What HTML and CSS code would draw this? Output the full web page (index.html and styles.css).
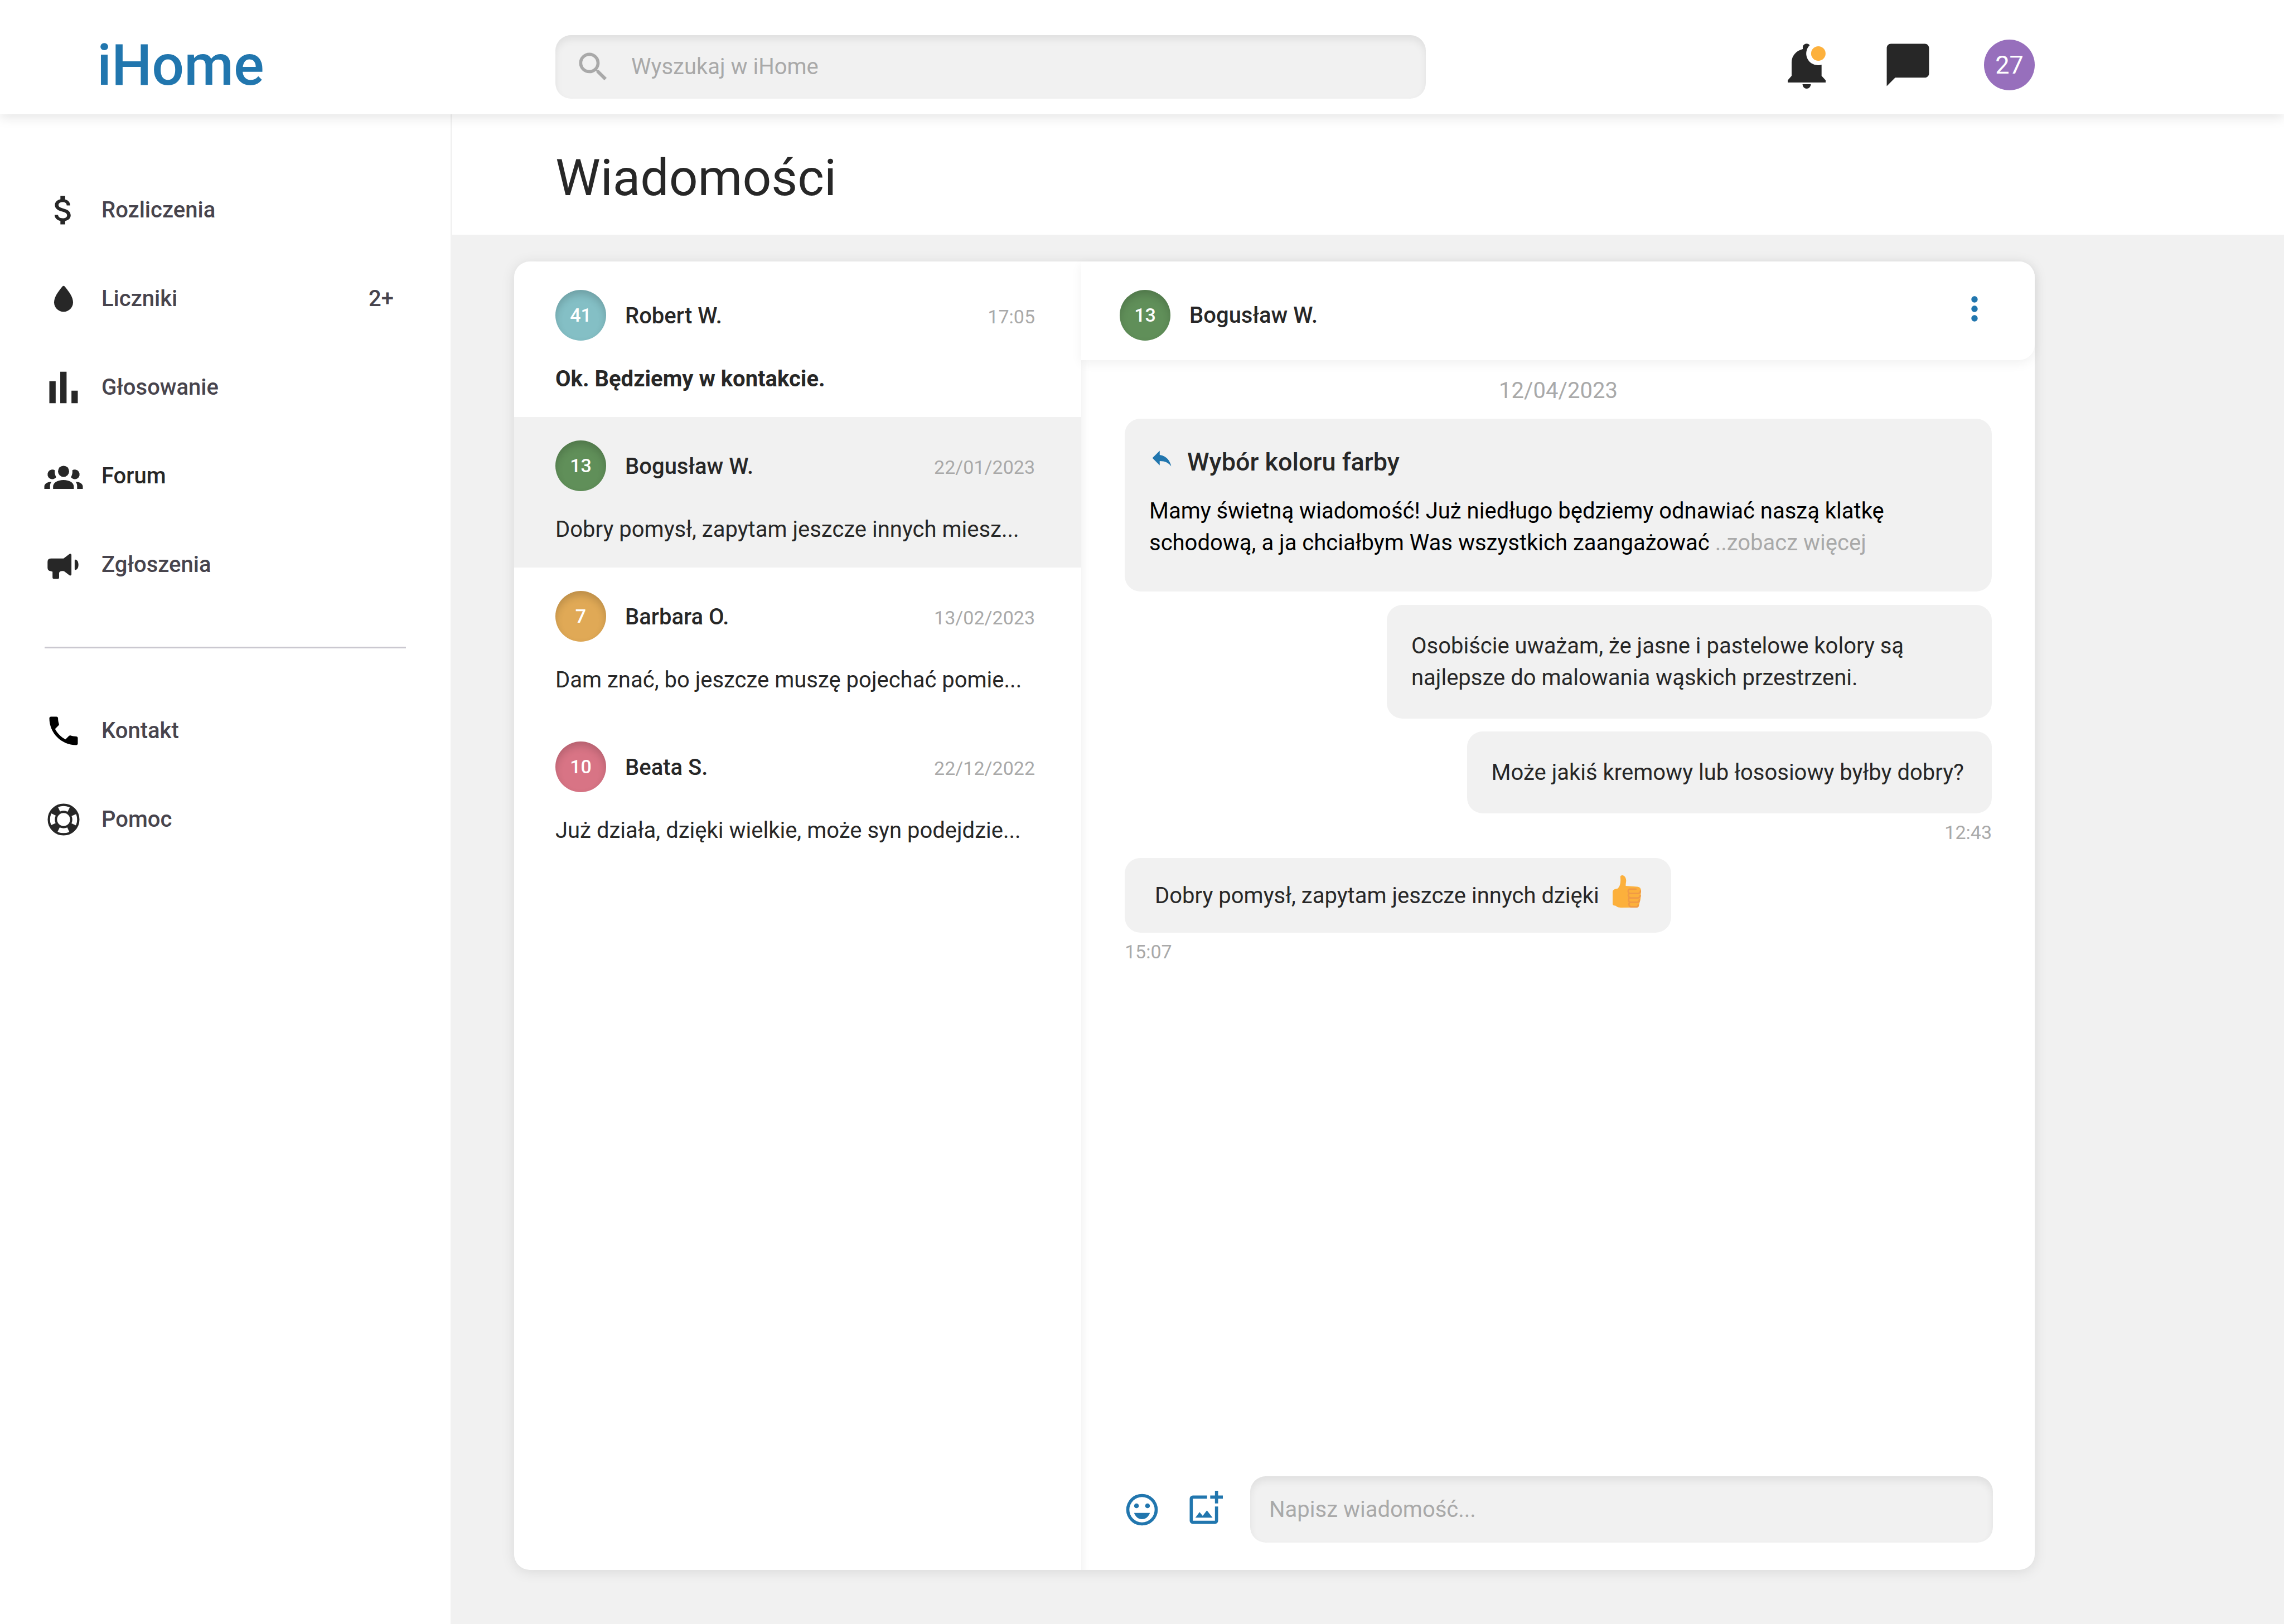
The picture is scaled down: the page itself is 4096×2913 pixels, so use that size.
FILE: index.html
```html
<!DOCTYPE html>
<html lang="pl">
<head>
<meta charset="utf-8">
<meta name="viewport" content="width=device-width, initial-scale=1">
<title>iHome – Wiadomości</title>
<link rel="stylesheet" href="styles.css">
</head>
<body>
<header class="topbar">
  <a class="logo" href="#">iHome</a>
  <form class="search" role="search">
    <svg class="icon" viewBox="0 0 24 24" aria-hidden="true"><path d="M15.5 14h-.79l-.28-.27A6.47 6.47 0 0 0 16 9.5 6.5 6.5 0 1 0 9.5 16c1.61 0 3.09-.59 4.23-1.57l.27.28v.79l5 4.99L20.49 19l-4.99-5zm-6 0C7.01 14 5 11.99 5 9.5S7.01 5 9.5 5 14 7.01 14 9.5 11.99 14 9.5 14z"/></svg>
    <input class="search-input" type="search" placeholder="Wyszukaj w iHome" aria-label="Wyszukaj w iHome">
  </form>
  <div class="actions">
    <button class="action" type="button" aria-label="Powiadomienia">
      <svg viewBox="-12 -8 91 91" aria-hidden="true">
        <path d="M0 69v-4l7-8V33c0-12 8-21 20-24V7a7 7 0 0 1 12.500-5A21 21 0 0 0 54.900 38q3 0 5.800-1v20l7.300 8v4zM26.500 72h15a7.500 8 0 0 1-15 0z"/>
        <circle cx="54.900" cy="17" r="13" fill="#fdb13d"/>
      </svg>
    </button>
    <button class="action" type="button" aria-label="Wiadomości">
      <svg viewBox="0 0 24 24" aria-hidden="true"><path d="M20 2H4c-1.100 0-2 .9-2 2v18l4-4h14c1.100 0 2-.9 2-2V4c0-1.100-.9-2-2-2z"/></svg>
    </button>
    <button class="action account" type="button">27</button>
  </div>
</header>

<div class="layout">
  <nav class="sidebar" aria-label="Menu główne">
    <ul class="menu">
      <li><a class="menu-link" href="#">
        <svg class="icon" viewBox="0 0 24 24" aria-hidden="true"><path d="M11.800 10.900c-2.270-.59-3-1.200-3-2.150 0-1.090 1.010-1.850 2.700-1.850 1.780 0 2.440.85 2.500 2.100h2.210c-.07-1.720-1.120-3.300-3.210-3.810V3h-3v2.160c-1.940.42-3.500 1.680-3.500 3.610 0 2.310 1.910 3.460 4.700 4.130 2.500.6 3 1.480 3 2.410 0 .69-.49 1.790-2.700 1.790-2.060 0-2.870-.92-2.980-2.100h-2.200c.12 2.190 1.760 3.420 3.680 3.830V21h3v-2.150c1.950-.37 3.500-1.500 3.500-3.550 0-2.840-2.430-3.810-4.700-4.400z"/></svg>
        <span>Rozliczenia</span></a></li>
      <li><a class="menu-link" href="#">
        <svg class="icon" viewBox="0 0 24 24" aria-hidden="true"><path d="M11.200 4.200q.8-.8 1.600 0C15.700 7.800 18 11 18 14.200a6 6 0 0 1-12 0C6 11 8.300 7.800 11.200 4.200z"/></svg>
        <span>Liczniki</span><span class="menu-count">2+</span></a></li>
      <li><a class="menu-link" href="#">
        <svg class="icon" viewBox="0 0 24 24" aria-hidden="true"><path d="M3 8h4v14H3zM9.900 2h4v20h-4zM17 14h4v8h-4z"/></svg>
        <span>Głosowanie</span></a></li>
      <li><a class="menu-link is-active" href="#">
        <svg class="icon" viewBox="0 0 68 68" aria-hidden="true"><circle cx="34" cy="25.400" r="10"/><path d="M15.200 57v-4.500C15.200 46 23 41 33.900 41s18.500 5 18.500 11.500V57zM18.300 23.600A8.600 8.600 0 1 0 20.800 36Q17.400 30 18.300 23.600zM49.700 23.600A8.600 8.600 0 1 1 47.200 36Q50.600 30 49.700 23.600zM-.5 57v-4.500c0-5 6-8.300 13.100-8.300Q9.700 47 9.700 52v5zM68.500 57v-4.500c0-5-6-8.300-13.100-8.300Q58.300 47 58.300 52v5z"/></svg>
        <span>Forum</span></a></li>
      <li><a class="menu-link" href="#">
        <svg class="icon" viewBox="0 0 68 68" aria-hidden="true"><path d="M11.300 22.800H34l10.500-8.100q2.200-1.400 3.600 1v35.800q-1.400 3-3.800 1.300L35.500 46q-1.500-1.200-3.500-.7-6 0-6 4V57q0 2.300-2.300 2.300h-7.200q-2.300 0-2.300-2.300V46.500l-3-1q-5.900-.6-5.900-6V28.800q0-6 6-6zM53.900 26.200q0-1.400 1.200-1.400c3 0 5.600 3.600 5.600 9.200s-2.600 9.300-5.600 9.300q-1.200 0-1.200-1.400z"/></svg>
        <span>Zgłoszenia</span></a></li>
    </ul>
    <hr class="menu-rule">
    <ul class="menu">
      <li><a class="menu-link" href="#">
        <svg class="icon icon-black" viewBox="0 0 24 24" aria-hidden="true"><path d="M6.620 10.790c1.440 2.830 3.760 5.140 6.590 6.590l2.200-2.200c.27-.27.67-.36 1.020-.24 1.120.37 2.330.57 3.570.57.55 0 1 .45 1 1V20c0 .55-.45 1-1 1-9.390 0-17-7.610-17-17 0-.55.45-1 1-1h3.500c.55 0 1 .45 1 1 0 1.250.2 2.450.57 3.570.11.35.03.74-.25 1.020l-2.200 2.200z"/></svg>
        <span>Kontakt</span></a></li>
      <li><a class="menu-link" href="#">
        <svg class="icon" viewBox="0 0 68 68" aria-hidden="true"><g fill="none" stroke="#272727"><circle cx="34" cy="34" r="26.400" stroke-width="4.200"/><circle cx="34" cy="34" r="13.700" stroke-width="4"/><circle cx="34" cy="34" r="20" stroke-width="10" stroke-dasharray="13.600 17.816" stroke-dashoffset="-8.900"/></g></svg>
        <span>Pomoc</span></a></li>
    </ul>
  </nav>

  <main class="content">
    <div class="title-band"><h1 class="title">Wiadomości</h1></div>
    <section class="card">
      <ul class="threads">
        <li><a class="thread" href="#">
          <span class="thread-head"><span class="avatar avatar-teal">41</span><span class="thread-meta"><span class="name">Robert W.</span><time class="stamp">17:05</time></span></span>
          <span class="preview is-unread">Ok. Będziemy w kontakcie.</span></a></li>
        <li><a class="thread is-selected" href="#">
          <span class="thread-head"><span class="avatar avatar-green">13</span><span class="thread-meta"><span class="name">Bogusław W.</span><time class="stamp">22/01/2023</time></span></span>
          <span class="preview">Dobry pomysł, zapytam jeszcze innych miesz...</span></a></li>
        <li><a class="thread" href="#">
          <span class="thread-head"><span class="avatar avatar-amber">7</span><span class="thread-meta"><span class="name">Barbara O.</span><time class="stamp">13/02/2023</time></span></span>
          <span class="preview">Dam znać, bo jeszcze muszę pojechać pomie...</span></a></li>
        <li><a class="thread" href="#">
          <span class="thread-head"><span class="avatar avatar-pink">10</span><span class="thread-meta"><span class="name">Beata S.</span><time class="stamp">22/12/2022</time></span></span>
          <span class="preview">Już działa, dzięki wielkie, może syn podejdzie...</span></a></li>
      </ul>

      <section class="chat">
        <header class="chat-head">
          <span class="avatar avatar-green">13</span>
          <h2 class="name">Bogusław W.</h2>
          <button class="icon-button chat-menu" type="button" aria-label="Więcej opcji">
            <svg class="icon icon-blue" viewBox="0 0 24 24" aria-hidden="true"><path d="M12 8c1.100 0 2-.9 2-2s-.9-2-2-2-2 .9-2 2 .9 2 2 2zm0 2c-1.100 0-2 .9-2 2s.9 2 2 2 2-.9 2-2-.9-2-2-2zm0 6c-1.100 0-2 .9-2 2s.9 2 2 2 2-.9 2-2-.9-2-2-2z"/></svg>
          </button>
        </header>
        <div class="messages">
          <time class="day">12/04/2023</time>
          <article class="bubble bubble-quote">
            <h3 class="quote-title"><svg class="reply-icon" viewBox="0 0 24 24" aria-hidden="true"><path d="M10 9V5l-7 7 7 7v-4.100c5 0 8.500 1.600 11 5.100-1-5-4-10-11-11z"/></svg>Wybór koloru farby</h3>
            <p class="quote-text">Mamy świetną wiadomość! Już niedługo będziemy odnawiać naszą klatkę schodową, a ja chciałbym Was wszystkich zaangażować <a class="more" href="#">..zobacz więcej</a></p>
          </article>
          <p class="bubble bubble-own">Osobiście uważam, że jasne i pastelowe kolory są najlepsze do malowania wąskich przestrzeni.</p>
          <p class="bubble bubble-own">Może jakiś kremowy lub łososiowy byłby dobry?</p>
          <time class="stamp sent-at sent-at-own">12:43</time>
          <p class="bubble bubble-reply">Dobry pomysł, zapytam jeszcze innych dzięki
            <svg class="thumb" viewBox="107 59 223 253" role="img" aria-label="Kciuk w górę">
              <path fill="#fcb03c" d="M168 66q2-7 16-7c16 2 27 18 29 38 1 16-5 30-3 45l90 6c20 2 31 13 29 34l-3 60-14 60q-3 9-12 9l-130 1q-20 0-27-5l-12-9-17-3q-7-4-7-14V188q1-12 10-17 8-5 30-8 22-23 22-65c0-14-2-22-1-32z"/>
              <g fill="none" stroke="#f09a45" stroke-width="12" stroke-linecap="round" stroke-linejoin="round"><path d="M290 167h-48q-14 2-13 18 1 15 16 16h64q15-1 16-18M241 201q-12 4-11 17 2 17 18 18h60q14-2 15-18M243 236q-12 3-11 17 1 16 14 17h56q13-2 15-18M246 270q-11 3-11 17 1 17 16 19h44q11-1 13-14"/></g>
            </svg>
          </p>
          <time class="stamp sent-at">15:07</time>
        </div>
        <form class="composer">
          <button class="icon-button" type="button" aria-label="Emotikony">
            <svg class="icon icon-blue" viewBox="0 0 24 24" aria-hidden="true"><path d="M12 2a10 10 0 1 0 0 20 10 10 0 0 0 0-20zm0 18a8 8 0 1 1 0-16 8 8 0 0 1 0 16zM8.500 11a1.500 1.500 0 1 0 0-3 1.500 1.500 0 0 0 0 3zm7 0a1.500 1.500 0 1 0 0-3 1.500 1.500 0 0 0 0 3zM12 18c2.330 0 4.200-1.660 5-4H7c.8 2.340 2.670 4 5 4z"/></svg>
          </button>
          <button class="icon-button" type="button" aria-label="Dodaj zdjęcie">
            <svg class="icon icon-blue" viewBox="0 0 24 24" aria-hidden="true"><path d="M14 3v2H5v14h14v-9h2v9a2 2 0 0 1-2 2H5a2 2 0 0 1-2-2V5a2 2 0 0 1 2-2zM19 0h2v3h3v2h-3v3h-2V5h-3V3h3zM6.600 17l2.650-3.500 2 2.400 2.650-3.500 3.600 4.600z"/></svg>
          </button>
          <input class="composer-input" type="text" placeholder="Napisz wiadomość..." aria-label="Napisz wiadomość">
        </form>
      </section>
    </section>
  </main>
</div>
</body>
</html>
```
FILE: styles.css
```css
:root {
  --ink: #272727;
  --muted: #a9a9a9;
  --blue: #2176ae;
  --grey: #f1f1f1;
  --text: 40px;
  --small: 34px;
  --radius: 28px;
}

* {
  box-sizing: border-box;
}

body {
  margin: 0;
  min-height: 100vh;
  display: flex;
  flex-direction: column;
  background: #fff;
  color: var(--ink);
  font-family: Roboto, "Liberation Sans", sans-serif;
  font-size: var(--text);
  line-height: 57px;
}

h1, h2, h3, p, ul {
  margin: 0;
  padding: 0;
}

ul {
  list-style: none;
}

a {
  color: inherit;
  text-decoration: none;
}

button {
  padding: 0;
  border: 0;
  background: none;
  color: inherit;
  font: inherit;
}

input {
  border: 0;
  outline: 0;
  background: none;
  color: var(--ink);
  font: inherit;
}

input::placeholder {
  color: var(--muted);
  opacity: 1;
}

.icon {
  display: block;
  flex: none;
  width: 68px;
  height: 68px;
  fill: var(--ink);
  overflow: visible;
}

.icon-black {
  fill: #000;
}

.icon-blue {
  fill: var(--blue);
}

/* Top bar */

.topbar {
  position: relative;
  z-index: 1;
  display: grid;
  grid-template-columns: 996px minmax(0, 1561px) 1fr;
  align-items: center;
  height: 205px;
  padding: 34px 447px 0 0;
  background: #fff;
  box-shadow: 0 6px 20px rgba(0, 0, 0, 0.1);
}

.logo {
  padding: 0 0 6px 174px;
  color: var(--blue);
  font-size: 102px;
  font-weight: 500;
  line-height: 114px;
}

.search {
  display: flex;
  align-items: center;
  gap: 34px;
  height: 114px;
  padding: 0 34px;
  border-radius: var(--radius);
  background: var(--grey);
  box-shadow: inset 0 8px 14px rgba(0, 0, 0, 0.07);
}

.search .icon {
  fill: var(--muted);
}

.search-input {
  flex: 1;
  min-width: 0;
  padding: 0;
}

.actions {
  display: flex;
  justify-content: flex-end;
  gap: 91px;
  padding-bottom: 6px;
}

.action {
  width: 91px;
  height: 91px;
}

.action svg {
  display: block;
  width: 91px;
  height: 91px;
  fill: var(--ink);
}

.account {
  border-radius: 50%;
  background: #976fbc;
  color: #fff;
  font-size: 45px;
}

/* Side menu */

.layout {
  flex: 1;
  display: grid;
  grid-template-columns: 811px minmax(0, 1fr);
}

.sidebar {
  padding-top: 92px;
  border-right: 3px solid var(--grey);
}

.menu-link {
  display: flex;
  align-items: center;
  gap: 34px;
  height: 159px;
  padding: 0 102px 0 80px;
  color: #47444d;
  font-weight: 500;
}

.menu-link.is-active {
  color: var(--ink);
}

.menu-count {
  margin-left: auto;
}

.menu-rule {
  height: 3px;
  margin: 68px 80px;
  border: 0;
  background: #cac8d0;
}

/* Page content */

.content {
  display: flex;
  flex-direction: column;
  background: var(--grey);
}

.title-band {
  padding: 68px 185px 56px;
  background: #fff;
}

.title {
  font-size: 91px;
  font-weight: 400;
  line-height: 92px;
}

.card {
  flex: 1;
  display: grid;
  grid-template-columns: 1017px minmax(0, 1fr);
  margin: 48px 447px 97px 111px;
  border-radius: var(--radius);
  background: #fff;
  box-shadow: 0 3px 24px rgba(0, 0, 0, 0.1);
}

.threads {
  padding-top: 9px;
}

.thread {
  display: flex;
  flex-direction: column;
  gap: 41px;
  padding: 42px 83px 40px 74px;
}

.thread.is-selected {
  background: var(--grey);
}

.thread-head {
  display: flex;
  align-items: center;
  gap: 34px;
}

.thread-meta {
  flex: 1;
  display: flex;
  align-items: baseline;
  justify-content: space-between;
  padding-top: 4px;
}

.avatar {
  display: grid;
  place-items: center;
  flex: none;
  width: 91px;
  height: 91px;
  border-radius: 50%;
  color: #fff;
  font-size: var(--small);
  font-weight: 500;
  box-shadow: inset 0 8px 14px rgba(0, 0, 0, 0.16);
}

.avatar-teal {
  background: #84bfc5;
}

.avatar-green {
  background: #608f59;
}

.avatar-amber {
  background: #e0a956;
}

.avatar-pink {
  background: #d87485;
}

.name {
  font-size: var(--text);
  font-weight: 500;
}

.stamp {
  color: var(--muted);
  font-size: var(--small);
}

.preview {
  line-height: 56px;
  white-space: nowrap;
}

.preview.is-unread {
  font-weight: 700;
}

/* Conversation */

.chat {
  display: flex;
  flex-direction: column;
  border-radius: 0 var(--radius) var(--radius) 0;
  box-shadow: inset 16px 0 14px -12px rgba(0, 0, 0, 0.05);
}

.chat-head {
  display: flex;
  align-items: center;
  gap: 34px;
  padding: 51px 74px 35px 69px;
  border-radius: 0 var(--radius) var(--radius) 0;
  background: #fff;
  box-shadow: 0 6px 20px rgba(0, 0, 0, 0.06);
}

.chat-menu {
  align-self: flex-start;
  margin-left: auto;
}

.icon-button {
  flex: none;
}

.messages {
  flex: 1;
  display: flex;
  flex-direction: column;
  align-items: flex-start;
  padding: 26px 77px 23px 78px;
}

.day {
  align-self: center;
  margin-bottom: 22px;
  color: var(--muted);
}

.bubble {
  padding: 45px 50px 45px 44px;
  border-radius: var(--radius);
  background: var(--grey);
}

.bubble-quote {
  align-self: stretch;
  margin-bottom: 24px;
  padding: 48px 44px 59px;
}

.quote-title {
  display: flex;
  align-items: flex-start;
  gap: 23px;
  margin-bottom: 29px;
  font-size: 45px;
  font-weight: 500;
  line-height: 60px;
}

.reply-icon {
  flex: none;
  width: 45px;
  height: 45px;
  fill: var(--blue);
}

.quote-text {
  color: #000;
}

.more {
  color: var(--muted);
}

.bubble-own {
  align-self: flex-end;
  max-width: 1085px;
}

.bubble-own + .bubble-own {
  margin-top: 23px;
}

.sent-at {
  margin: 11px 0 23px;
  line-height: 46px;
}

.sent-at-own {
  align-self: flex-end;
}

.bubble-reply {
  display: flex;
  align-items: center;
  gap: 24px;
  padding: 38px 54px;
}

.thumb {
  flex: none;
  width: 51px;
  height: 58px;
  margin: -7px 0 7px;
}

.composer {
  display: flex;
  align-items: center;
  gap: 43px;
  padding: 0 75px 49px;
}

.composer-input {
  flex: 1;
  min-width: 0;
  height: 119px;
  margin-left: 6px;
  padding: 0 34px;
  border-radius: var(--radius);
  background: var(--grey);
  box-shadow: inset 0 8px 14px rgba(0, 0, 0, 0.07);
}
```
